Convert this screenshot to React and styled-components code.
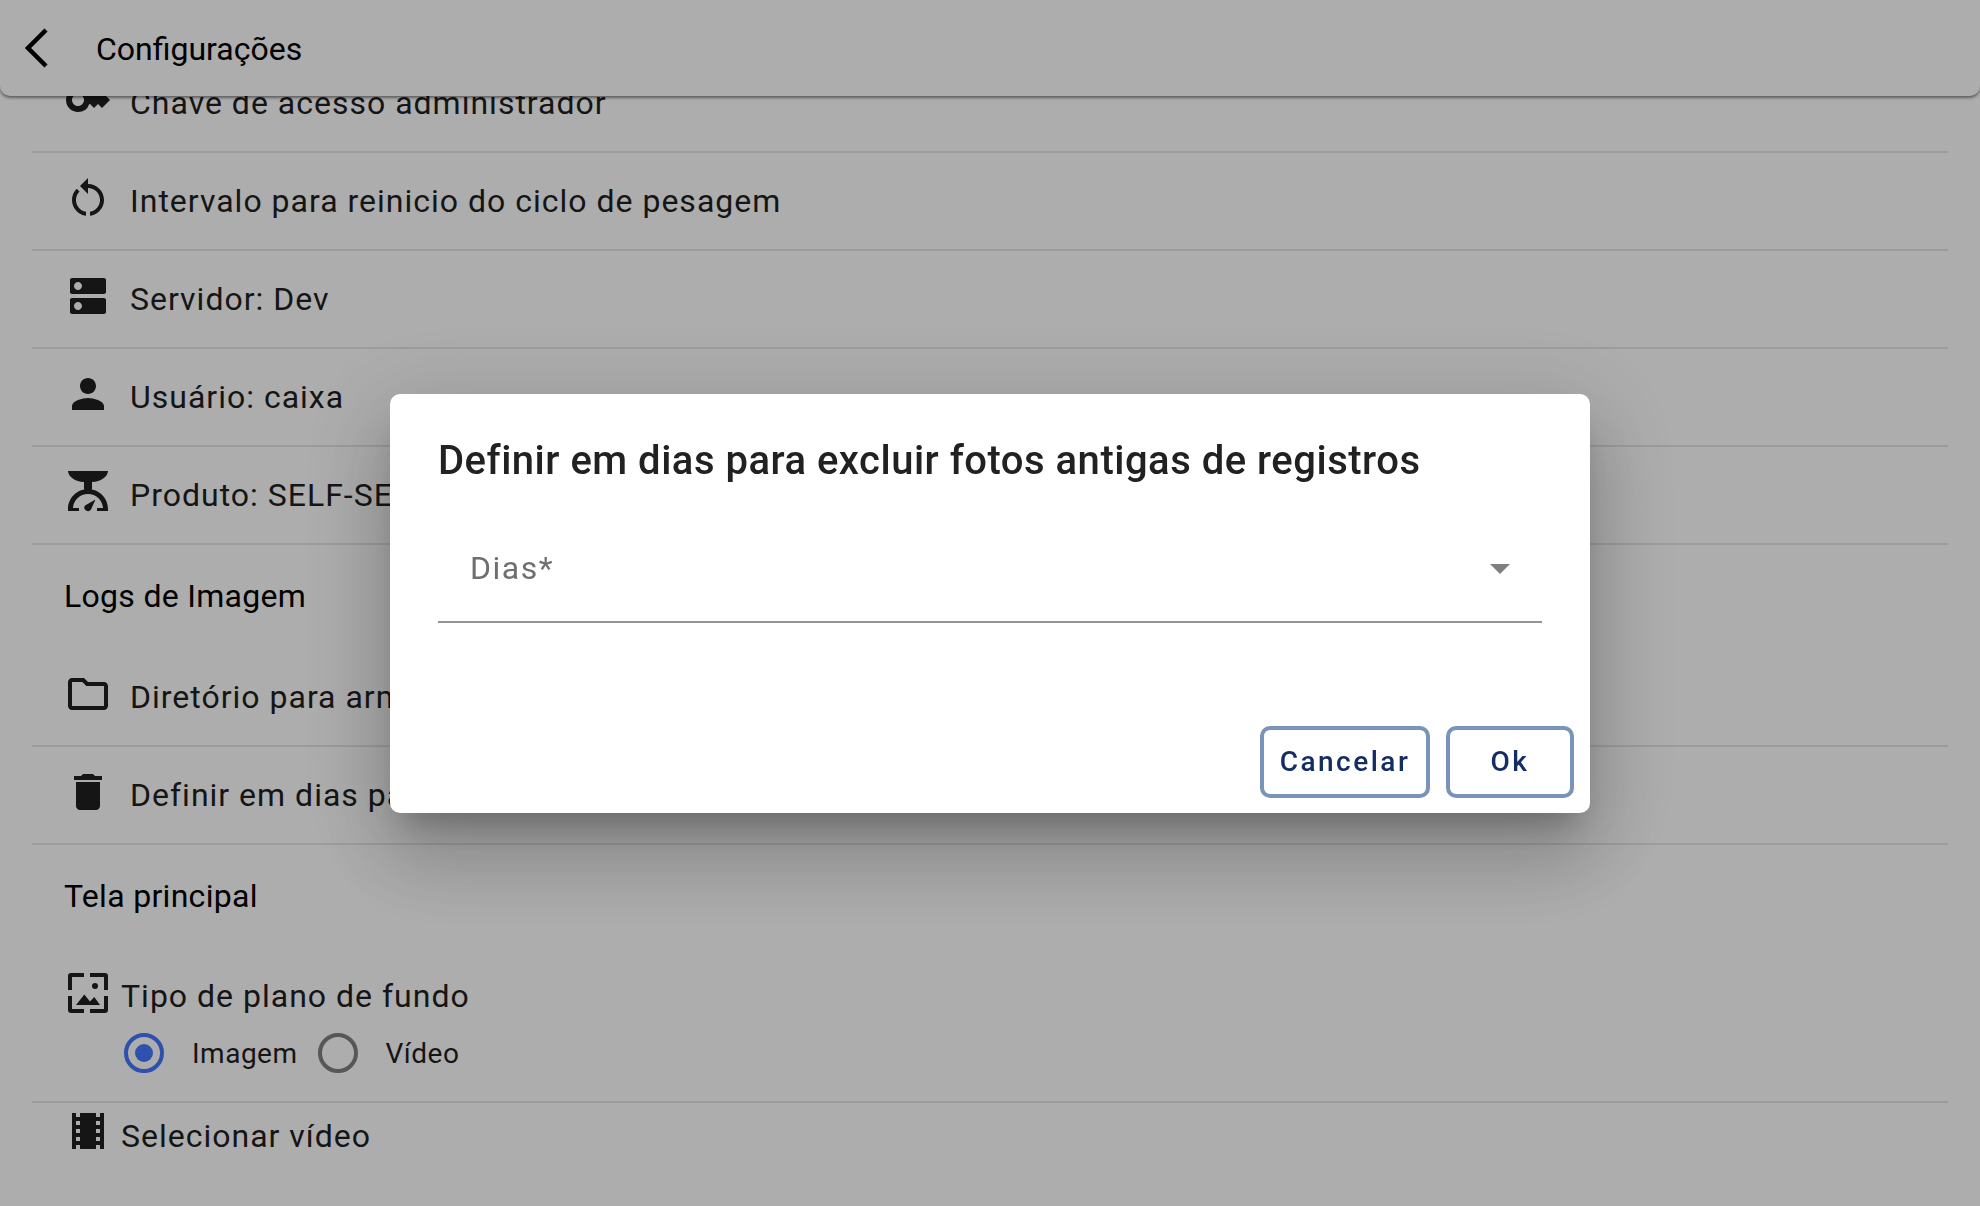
import React from "react";
import styled, { createGlobalStyle } from "styled-components";
import {
  MdKey,
  MdRestartAlt,
  MdDns,
  MdPerson,
  MdOutlineFolder,
  MdDelete,
  MdLocalMovies,
} from "react-icons/md";

const GlobalStyle = createGlobalStyle`
  html, body {
    margin: 0;
    padding: 0;
    height: 100%;
    background: #fff;
    font-family: Roboto, "Noto Sans", sans-serif;
  }
`;

const Page = styled.div`
  height: 100vh;
  overflow: hidden;
  background: #fff;
`;

const Header = styled.header`
  position: relative;
  z-index: 2;
  display: flex;
  align-items: center;
  height: 96px;
  padding-left: 22px;
  gap: 46px;
  background: #fff;
  border-radius: 0 0 10px 10px;
  box-shadow: 0 2px 3px rgba(0, 0, 0, 0.45);
`;

const HeaderTitle = styled.h1`
  margin: 2px 0 0;
  font-size: 32px;
  font-weight: 400;
  color: #000;
`;

const List = styled.main`
  margin: -41px 32px 0 32px;
  display: flex;
  flex-direction: column;
`;

const Row = styled.div`
  display: flex;
  align-items: center;
  gap: 18px;
  height: 96px;
  padding-left: 32px;
  border-bottom: 2px solid #e6e6e6;
`;

const IconSlot = styled.span`
  display: flex;
  width: 48px;
  height: 48px;
  flex: none;
  margin-top: -${(p) => p.$lift || 6}px;
  color: #1f1f1f;
`;

const RowLabel = styled.span`
  font-size: 32px;
  letter-spacing: 1px;
  color: #1f1f1f;
  white-space: nowrap;
`;

const SectionTitle = styled.h2`
  display: flex;
  align-items: center;
  box-sizing: border-box;
  height: 104px;
  margin: 0;
  padding: 0 0 2px 32px;
  font-size: 32px;
  font-weight: 400;
  letter-spacing: 0.3px;
  color: #000;
`;

const OptionBlock = styled.div`
  display: flex;
  flex-direction: column;
  height: 154px;
  padding-top: 26px;
  box-sizing: border-box;
  border-bottom: 2px solid #e6e6e6;
`;

const OptionHead = styled.div`
  display: flex;
  align-items: center;
  gap: 9px;
  padding-left: 32px;
`;

const RadioGroup = styled.div`
  display: flex;
  align-items: center;
  height: 40px;
  margin-top: 16px;
  padding-left: 92px;
`;

const Radio = styled.span`
  display: flex;
  align-items: center;
  justify-content: center;
  box-sizing: border-box;
  width: 40px;
  height: 40px;
  border-radius: 50%;
  border: 4px solid ${(p) => (p.$checked ? "#4478ff" : "#808080")};

  &::after {
    content: "";
    width: 18px;
    height: 18px;
    border-radius: 50%;
    background: ${(p) => (p.$checked ? "#4478ff" : "transparent")};
  }
`;

const RadioLabel = styled.span`
  margin: 0 20px 0 28px;
  font-size: 28px;
  letter-spacing: 0.5px;
  color: #1f1f1f;
`;

const VideoRow = styled.div`
  display: flex;
  align-items: center;
  gap: 9px;
  margin-top: 13px;
  padding-left: 32px;
`;

const Scrim = styled.div`
  position: fixed;
  inset: 0;
  z-index: 5;
  display: flex;
  align-items: center;
  justify-content: center;
  background: rgba(0, 0, 0, 0.32);
`;

const Dialog = styled.section`
  display: flex;
  flex-direction: column;
  box-sizing: border-box;
  width: 1200px;
  height: 419px;
  padding: 43px 16px 15px 48px;
  background: #fff;
  border-radius: 10px;
  box-shadow: 0 22px 30px -14px rgba(0, 0, 0, 0.25),
    0 48px 76px 6px rgba(0, 0, 0, 0.14), 0 18px 92px 16px rgba(0, 0, 0, 0.12);
`;

const DialogTitle = styled.h2`
  margin: 0;
  font-size: 40px;
  font-weight: 500;
  letter-spacing: 0.5px;
  color: #212121;
  white-space: nowrap;
`;

const SelectField = styled.div`
  display: flex;
  align-items: center;
  justify-content: space-between;
  height: 99px;
  margin: 36px 32px 0 0;
  padding: 0 32px 2px;
  border-bottom: 2px solid #949494;
`;

const Placeholder = styled.span`
  margin-bottom: 2px;
  font-size: 32px;
  letter-spacing: 1.5px;
  color: #6f6f6f;
`;

const Caret = styled.span`
  width: 0;
  height: 0;
  border-left: 10px solid transparent;
  border-right: 10px solid transparent;
  border-top: 10px solid #7f7f7f;
`;

const Actions = styled.div`
  display: flex;
  justify-content: flex-end;
  gap: 16px;
  margin-top: auto;
`;

const ActionButton = styled.button`
  box-sizing: border-box;
  width: ${(p) => p.$width}px;
  height: 72px;
  padding: 0;
  background: #fff;
  border: 4px solid #7a93b8;
  border-radius: 10px;
  font-family: inherit;
  font-size: 28px;
  font-weight: 500;
  letter-spacing: 2.5px;
  color: #142d63;
`;

const BackChevron = () => (
  <svg width="28" height="40" viewBox="0 0 28 40" fill="none" stroke="#000" strokeWidth="4.5">
    <path d="M24 2 6 20l18 18" />
  </svg>
);

const ScaleIcon = () => (
  <svg width="48" height="48" viewBox="0 0 48 48" fill="#1f1f1f">
    <path d="M4 3h40c-.5 6-7 10.5-16 11v7.5h-8V14C11 13.5 4.5 9 4 3z" />
    <path d="M4 43v-2c0-11 9-20 20-20s20 9 20 20v2H33v-3h6c-.5-8-7-14-15-14S9.5 32 9 40h6v3H4z" />
    <path d="M31.5 31.5 27 41.5a3.4 3.4 0 0 1-6-4z" />
  </svg>
);

const FrameImageIcon = () => (
  <svg width="48" height="48" viewBox="0 0 48 48" fill="#1f1f1f">
    <path d="M4 7a3 3 0 0 1 3-3h13v4H8v13H4V7zM26 4h15a3 3 0 0 1 3 3v14h-4V8H26V4zM4 27h4v13h12v4H7a3 3 0 0 1-3-3V27zM40 27h4v14a3 3 0 0 1-3 3H26v-4h14V27z" />
    <circle cx="31" cy="17" r="3" />
    <path d="M12 36l8.3-10.5L26 32.5l4.3-4.5L36 36H12z" />
  </svg>
);

const rowsTop = [
  { icon: <MdKey size={48} />, label: "Chave de acesso administrador" },
  { icon: <MdRestartAlt size={48} />, label: "Intervalo para reinicio do ciclo de pesagem" },
  { icon: <MdDns size={48} />, label: "Servidor: Dev" },
  { icon: <MdPerson size={48} />, label: "Usuário: caixa" },
  { icon: <ScaleIcon />, label: "Produto: SELF-SERVICE" },
];

const rowsLogs = [
  { icon: <MdOutlineFolder size={48} />, label: "Diretório para armazenar fotos" },
  { icon: <MdDelete size={48} />, label: "Definir em dias para excluir fotos antigas de registros" },
];

function SettingRow({ icon, label }) {
  return (
    <Row>
      <IconSlot>{icon}</IconSlot>
      <RowLabel>{label}</RowLabel>
    </Row>
  );
}

export default function App() {
  return (
    <Page>
      <GlobalStyle />
      <Header>
        <BackChevron />
        <HeaderTitle>Configurações</HeaderTitle>
      </Header>

      <List>
        {rowsTop.map((r) => (
          <SettingRow key={r.label} {...r} />
        ))}

        <SectionTitle>Logs de Imagem</SectionTitle>
        {rowsLogs.map((r) => (
          <SettingRow key={r.label} {...r} />
        ))}

        <SectionTitle>Tela principal</SectionTitle>
        <OptionBlock>
          <OptionHead>
            <IconSlot>
              <FrameImageIcon />
            </IconSlot>
            <RowLabel>Tipo de plano de fundo</RowLabel>
          </OptionHead>
          <RadioGroup>
            <Radio $checked />
            <RadioLabel>Imagem</RadioLabel>
            <Radio />
            <RadioLabel>Vídeo</RadioLabel>
          </RadioGroup>
        </OptionBlock>
        <VideoRow>
          <IconSlot $lift={9}>
            <MdLocalMovies size={48} />
          </IconSlot>
          <RowLabel>Selecionar vídeo</RowLabel>
        </VideoRow>
      </List>

      <Scrim>
        <Dialog>
          <DialogTitle>Definir em dias para excluir fotos antigas de registros</DialogTitle>
          <SelectField>
            <Placeholder>Dias*</Placeholder>
            <Caret />
          </SelectField>
          <Actions>
            <ActionButton $width={170}>Cancelar</ActionButton>
            <ActionButton $width={128}>Ok</ActionButton>
          </Actions>
        </Dialog>
      </Scrim>
    </Page>
  );
}
